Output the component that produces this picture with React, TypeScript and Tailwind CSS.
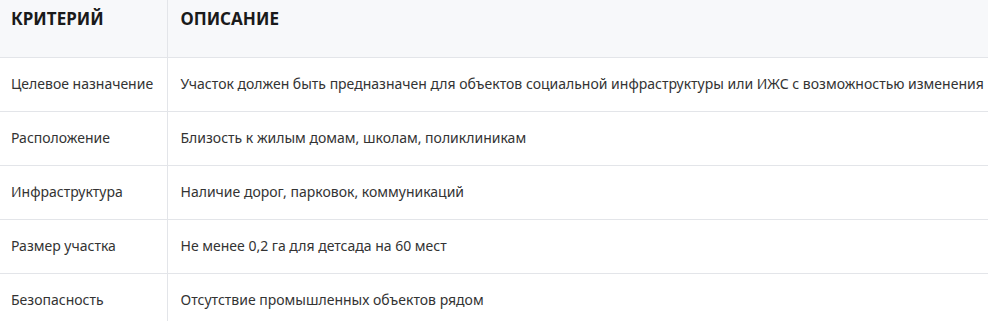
import React from "react";

const rows = [
  ["Целевое назначение", "Участок должен быть предназначен для объектов социальной инфраструктуры или ИЖС с возможностью изменения"],
  ["Расположение", "Близость к жилым домам, школам, поликлиникам"],
  ["Инфраструктура", "Наличие дорог, парковок, коммуникаций"],
  ["Размер участка", "Не менее 0,2 га для детсада на 60 мест"],
  ["Безопасность", "Отсутствие промышленных объектов рядом"],
];

export default function App() {
  return (
    <div className="w-[988px] h-[321px] overflow-hidden bg-white" style={{ fontFamily: '"Noto Sans", "Open Sans", sans-serif' }}>
      <table className="border-collapse w-[1200px] table-fixed">
        <colgroup>
          <col className="w-[167px]" />
          <col />
        </colgroup>
        <thead>
          <tr className="bg-[#f7f8fa] border-b border-[#e3e5e9]">
            <th className="h-[57px] text-left align-top pt-[7px] pl-[11px] text-[17px] leading-[24px] font-bold text-[#1a1a1a] border-r border-[#e3e5e9] whitespace-nowrap">КРИТЕРИЙ</th>
            <th className="h-[57px] text-left align-top pt-[7px] pl-[13px] text-[17px] leading-[24px] font-bold text-[#1a1a1a] whitespace-nowrap">ОПИСАНИЕ</th>
          </tr>
        </thead>
        <tbody>
          {rows.map(([a, b]) => (
            <tr key={a} className="border-b border-[#e3e5e9]">
              <td className="h-[54px] pl-[11px] text-[14px] leading-[20px] text-[#333333] border-r border-[#e3e5e9] whitespace-nowrap">{a}</td>
              <td className="h-[54px] pl-[13px] text-[14px] leading-[20px] text-[#333333] whitespace-nowrap">{b}</td>
            </tr>
          ))}
        </tbody>
      </table>
    </div>
  );
}
